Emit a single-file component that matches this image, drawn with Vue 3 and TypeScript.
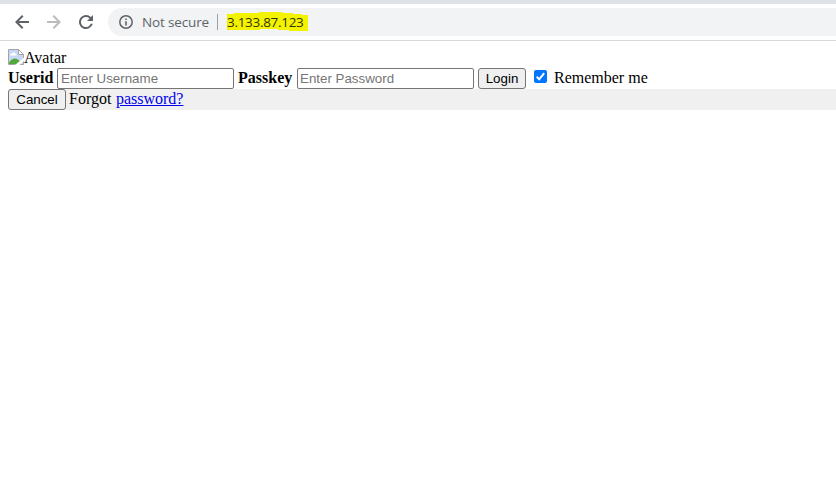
<script setup lang="ts">
import { ref } from 'vue'

const address = '3.133.87.123'
const username = ref('')
const password = ref('')
const remember = ref(true)
</script>

<template>
  <div class="browser">
    <header class="toolbar">
      <svg class="nav" viewBox="0 0 16 16"><path d="M15 7H4.9l4.6-4.6L8 1 1 8l7 7 1.4-1.4L4.9 9H15z" fill="#5f6368" /></svg>
      <svg class="nav" viewBox="0 0 16 16"><path d="M1 7h10.1L6.5 2.4 8 1l7 7-7 7-1.4-1.4L11.1 9H1z" fill="#babcbe" /></svg>
      <svg class="nav" viewBox="0 0 16 16"><path d="M12.95 3.05A7 7 0 1 0 14.8 9.75h-2.1A5 5 0 1 1 11.5 4.5L9 7h6V1z" fill="#5f6368" /></svg>
      <div class="omnibox">
        <svg class="info" viewBox="0 0 14 14"><circle cx="7" cy="7" r="6.2" fill="none" stroke="#5f6368" stroke-width="1.5" /><path d="M6.2 6.2h1.6v4.3H6.2zM6.2 3.5h1.6V5H6.2z" fill="#5f6368" /></svg>
        <span class="security">Not secure</span>
        <span class="divider"></span>
        <span class="address">
          <svg class="marker" viewBox="0 0 81 20"><path d="M0 2h7V1h25V0h23v1h11v1h9v1h6v16H62v-1H51v-1H33v1H0z" fill="#f3f300" /></svg>
          <span class="url">{{ address }}</span>
        </span>
      </div>
    </header>
    <main class="page">
      <div class="avatar">
        <svg class="broken" viewBox="0 0 16 16">
          <path d="M.5.5h10l5 5v10H.5z" fill="#c6d8f5" stroke="#a5a5a5" />
          <path d="M2 6.500c0-1.500 1-2 2-2 .5-1.500 3-1.500 3.500.3 1.500 0 1.500 1.700.5 1.700z" fill="#fff" />
          <path d="M1 15v-1.500c3-4.500 7-5.500 10-2l2 3.500z" fill="#52a83b" />
          <path d="M10.500.5v5h5z" fill="#fff" stroke="#a5a5a5" />
          <path d="M7 16l9-7.500V12l-4.500 4z" fill="#fff" />
        </svg>
        <span>Avatar</span>
      </div>
      <div class="row">
        <b class="user-label">Userid</b>
        <input v-model="username" class="field" type="text" placeholder="Enter Username" />
        <b class="pass-label">Passkey</b>
        <input v-model="password" class="field secret" type="password" placeholder="Enter Password" />
        <button class="btn login" type="button">Login</button>
        <label class="remember">
          <input v-model="remember" class="check" type="checkbox" />
          <svg v-if="remember" class="tick" viewBox="0 0 13 13"><rect width="13" height="13" rx="2" fill="#0075ff" /><path d="M2.700 6.800l2.500 2.500 5-6.200" fill="none" stroke="#fff" stroke-width="2" /></svg>
          <svg v-else class="tick" viewBox="0 0 13 13"><rect x=".5" y=".5" width="12" height="12" rx="2" fill="#fff" stroke="#767676" /></svg>
          <span>Remember me</span>
        </label>
      </div>
      <div class="row footer">
        <button class="btn cancel" type="button">Cancel</button>
        <span class="forgot">Forgot <a href="#">password?</a></span>
      </div>
    </main>
  </div>
</template>

<style>
body {
  background: #fff;
  overflow: hidden;
}
</style>

<style scoped>
.browser {
  height: 496px;
  overflow: hidden;
  font-family: "Liberation Serif", "Times New Roman", serif;
  font-size: 16px;
  color: #000;
}
.toolbar {
  box-sizing: border-box;
  height: 41px;
  display: flex;
  align-items: center;
  gap: 16px;
  padding-left: 14px;
  border-top: 4px solid #dee1e6;
  border-bottom: 1px solid #d6d7d9;
}
.nav {
  width: 16px;
  height: 16px;
  flex: none;
}
.omnibox {
  flex: 1;
  height: 28px;
  margin-left: -2px;
  padding-left: 11px;
  display: flex;
  align-items: center;
  border-radius: 14px 0 0 14px;
  background: #f1f3f4;
  font-family: "Open Sans", "Noto Sans", sans-serif;
  font-size: 14px;
  line-height: 20px;
  white-space: nowrap;
}
.info {
  width: 14px;
  height: 14px;
  flex: none;
}
.security {
  width: 67px;
  margin-left: 9px;
  color: #5f6368;
  font-size: 13.500px;
  letter-spacing: -0.15px;
}
.divider {
  width: 1px;
  height: 16px;
  margin-left: 8px;
  background: #9aa0a6;
}
.address {
  display: grid;
  width: 81px;
  margin-left: 9px;
}
.marker,
.url {
  grid-area: 1 / 1;
}
.marker {
  width: 81px;
  height: 20px;
}
.url {
  z-index: 1;
  color: #33350a;
  font-size: 13.500px;
  letter-spacing: -0.3px;
}
.page {
  padding: 8px 0 0 8px;
}
.avatar {
  display: flex;
  height: 19px;
  line-height: 18px;
}
.broken {
  width: 16px;
  height: 16px;
}
.row {
  display: flex;
  height: 21px;
  line-height: 20px;
  white-space: nowrap;
}
.user-label {
  width: 49px;
}
.pass-label {
  width: 59px;
  margin-left: 4px;
}
.field {
  box-sizing: border-box;
  width: 177px;
  height: 21px;
  margin: 0;
  padding: 1px 2px 1px 3px;
  border: 1px solid #767676;
  border-radius: 2px;
  background: #fff;
  font: 13.333px "Liberation Sans", Arial, sans-serif;
}
.secret {
  padding-left: 2px;
}
.field::placeholder {
  color: #757575;
}
.btn {
  box-sizing: border-box;
  height: 21px;
  margin: 0;
  padding: 0;
  border: 1px solid #767676;
  border-radius: 3px;
  background: #efefef;
  color: #000;
  font: 13.333px "Liberation Sans", Arial, sans-serif;
}
.login {
  width: 48px;
  margin-left: 4px;
}
.cancel {
  width: 58px;
}
.remember {
  display: flex;
  margin-left: 8px;
}
.check {
  appearance: none;
  width: 0;
  height: 0;
  margin: 0;
}
.tick {
  width: 13px;
  height: 13px;
  margin: 2px 7px 0 0;
}
.footer {
  background: #f0f0f0;
}
.forgot {
  margin-left: 3px;
  word-spacing: 0.5px;
}
.forgot a {
  color: #0000ee;
}
</style>
